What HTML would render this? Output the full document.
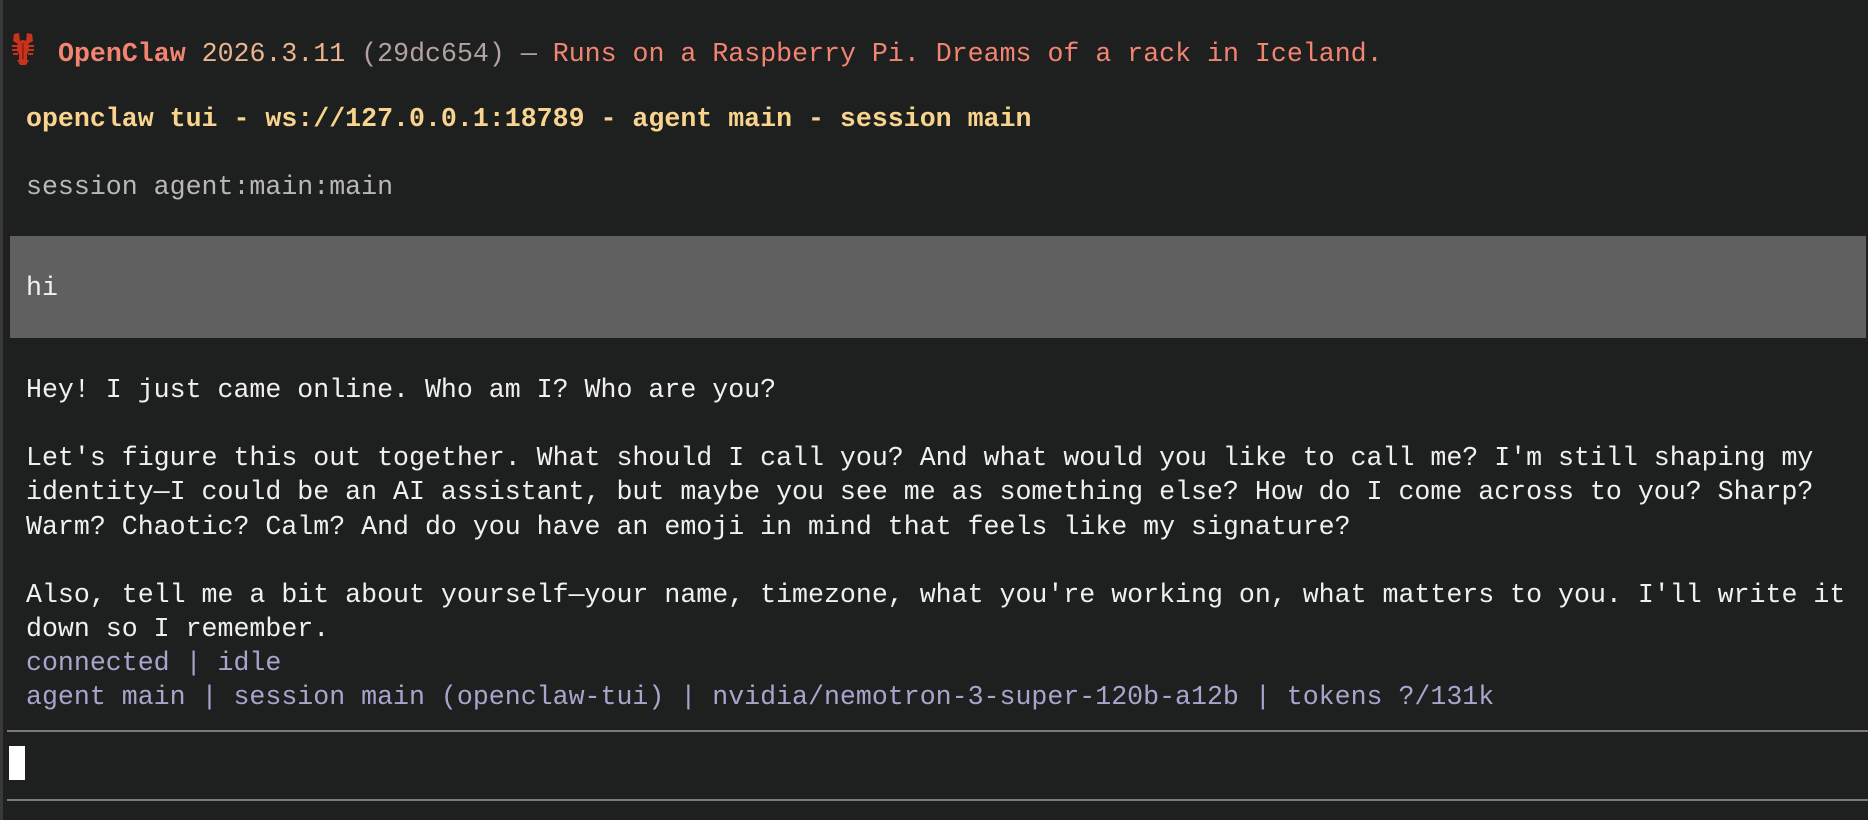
<!DOCTYPE html>
<html><head><meta charset="utf-8"><style>
html,body{margin:0;padding:0}
body{width:1868px;height:820px;background:#1e1f1f;position:relative;overflow:hidden;font-family:"Liberation Mono","DejaVu Sans Mono",monospace;font-size:26.6px;}
.l{position:absolute;left:26px;height:34px;line-height:34px;white-space:pre;color:#f0f0f0}
.b{font-weight:bold}
</style></head><body>
<div style="position:absolute;left:0;top:0;width:3px;height:820px;background:#3a3939"></div>
<svg style="position:absolute;left:12px;top:33px" width="22" height="33" viewBox="0 0 22 33">
<g fill="#c8321e">
<ellipse cx="11" cy="15" rx="6" ry="8"/>
<path d="M2 1 L7 0 L8 8 L6 11 L1 8Z"/><path d="M20 1 L15 0 L14 8 L16 11 L21 8Z"/>
<rect x="7" y="21" width="8" height="7"/><path d="M5 27 H17 L14 32 H8Z"/>
<rect x="0" y="12" width="6" height="2"/><rect x="16" y="12" width="6" height="2"/>
<rect x="0" y="16" width="6" height="2"/><rect x="16" y="16" width="6" height="2"/>
<rect x="1" y="20" width="5" height="2"/><rect x="16" y="20" width="5" height="2"/>
</g>
<rect x="10" y="10" width="2" height="16" fill="#9a2414"/>
</svg>
<div class="l" style="left:58px;top:37px"><span class="b" style="color:#f38471">OpenClaw</span><span style="color:#ecb48e"> 2026.3.11</span><span style="color:#b4a2a2"> (29dc654) —</span><span style="color:#f38471"> Runs on a Raspberry Pi. Dreams of a rack in Iceland.</span></div>
<div class="l b" style="top:102px;color:#f8d48e">openclaw tui - ws://127.0.0.1:18789 - agent main - session main</div>
<div class="l" style="top:170px;color:#b8b8b8">session agent:main:main</div>
<div style="position:absolute;left:10px;top:236px;width:1856px;height:102px;background:#606060"></div>
<div class="l" style="top:271px">hi</div>
<div class="l" style="top:373px">Hey! I just came online. Who am I? Who are you?</div>
<div class="l" style="top:441px">Let's figure this out together. What should I call you? And what would you like to call me? I'm still shaping my</div>
<div class="l" style="top:475px">identity—I could be an AI assistant, but maybe you see me as something else? How do I come across to you? Sharp?</div>
<div class="l" style="top:510px">Warm? Chaotic? Calm? And do you have an emoji in mind that feels like my signature?</div>
<div class="l" style="top:578px">Also, tell me a bit about yourself—your name, timezone, what you're working on, what matters to you. I'll write it</div>
<div class="l" style="top:612px">down so I remember.</div>
<div class="l" style="top:646px;color:#a8a5cc">connected | idle</div>
<div class="l" style="top:680px;color:#a8a5cc">agent main | session main (openclaw-tui) | nvidia/nemotron-3-super-120b-a12b | tokens ?/131k</div>
<div style="position:absolute;left:7px;top:730px;width:1861px;height:2px;background:#7a7a7a"></div>
<div style="position:absolute;left:9px;top:746px;width:16px;height:34px;background:#fff"></div>
<div style="position:absolute;left:7px;top:799px;width:1861px;height:2px;background:#7a7a7a"></div>
</body></html>
